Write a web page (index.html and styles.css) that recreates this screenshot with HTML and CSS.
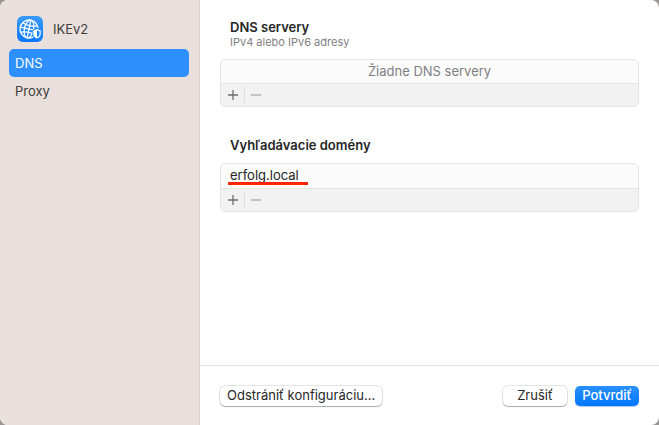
FILE: index.html
```
<!DOCTYPE html>
<html lang="sk">
<head>
<meta charset="UTF-8">
<meta name="viewport" content="width=device-width, initial-scale=1.0">
<title>IKEv2</title>
<link rel="stylesheet" href="styles.css">
</head>
<body>
<div class="window">
    <nav class="sidebar">
        <div class="profile">
            <svg class="profile-icon" viewBox="0 0 26 26" aria-hidden="true">
                <defs>
                    <linearGradient id="iconBlue" x1="0" y1="0" x2="0" y2="1">
                        <stop offset="0" stop-color="#3a9bff"/>
                        <stop offset="1" stop-color="#0a78fb"/>
                    </linearGradient>
                </defs>
                <rect width="26" height="26" rx="6" fill="url(#iconBlue)"/>
                <g fill="none" stroke="#fff" stroke-width="1.3" transform="rotate(12 12 13)">
                    <circle cx="12" cy="13" r="9"/>
                    <ellipse cx="12" cy="13" rx="4.6" ry="9"/>
                    <path d="M12 4v18M3 13h18M4.8 8.2c4 2 10.400 2 14.400 0M4.800 17.800c4-2 10.400-2 14.400 0"/>
                </g>
                <path d="M20 12.500l4.200 1.500v3.800c0 2.500-1.700 4.200-4.200 5.300-2.500-1.100-4.200-2.800-4.200-5.300v-3.800z" fill="#fff" stroke="#1c86fd" stroke-width="1"/>
                <path d="M20 14.500v6.700c1.800-.9 2.600-2 2.600-3.700v-2.100z" fill="#1c86fd"/>
            </svg>
            <span>IKEv2</span>
        </div>
        <a class="nav-item active" href="#dns">DNS</a>
        <a class="nav-item" href="#proxy">Proxy</a>
    </nav>

    <main class="main">
        <div class="content">
            <section class="group">
                <h2>DNS servery</h2>
                <p>IPv4 alebo IPv6 adresy</p>
                <div class="list">
                    <div class="list-row empty">Žiadne DNS servery</div>
                    <div class="list-tools">
                        <button type="button" class="tool" aria-label="Pridať DNS server">
                            <svg viewBox="0 0 10 10"><path d="M0 5h10M5 0v10"/></svg>
                        </button>
                        <button type="button" class="tool" aria-label="Odstrániť DNS server" disabled>
                            <svg viewBox="0 0 10 10"><path d="M0 5h10"/></svg>
                        </button>
                    </div>
                </div>
            </section>

            <section class="group">
                <h2>Vyhľadávacie domény</h2>
                <div class="list">
                    <div class="list-row"><span class="marked">erfolg.local</span></div>
                    <div class="list-tools">
                        <button type="button" class="tool" aria-label="Pridať doménu">
                            <svg viewBox="0 0 10 10"><path d="M0 5h10M5 0v10"/></svg>
                        </button>
                        <button type="button" class="tool" aria-label="Odstrániť doménu" disabled>
                            <svg viewBox="0 0 10 10"><path d="M0 5h10"/></svg>
                        </button>
                    </div>
                </div>
            </section>
        </div>

        <footer class="footer">
            <button type="button" class="btn">Odstrániť konfiguráciu...</button>
            <div class="footer-right">
                <button type="button" class="btn">Zrušiť</button>
                <button type="button" class="btn primary">Potvrdiť</button>
            </div>
        </footer>
    </main>
</div>
</body>
</html>
```
FILE: styles.css
```
* {
    box-sizing: border-box;
}

body {
    margin: 0;
    background-color: #999592;
    font-family: Inter, "Liberation Sans", sans-serif;
    font-size: 13px;
    line-height: 16px;
    color: #262626;
}

.window {
    display: flex;
    min-height: 100vh;
    border-radius: 8px;
    overflow: hidden;
    background-color: #fff;
}

.sidebar {
    flex: none;
    width: 200px;
    padding: 16px 10px 16px 9px;
    background-color: #e9e0dd;
    border-right: 1px solid #dcd4d1;
}

.profile {
    display: flex;
    align-items: center;
    gap: 10px;
    padding-left: 8px;
    margin-bottom: 7px;
    color: #403d3c;
}

.profile-icon {
    width: 26px;
    height: 26px;
}

.nav-item {
    display: block;
    padding: 6px;
    border-radius: 5px;
    color: #403d3c;
    text-decoration: none;
}

.nav-item.active {
    background-color: #2e90ff;
    color: #fff;
}

.main {
    flex: 1;
    display: flex;
    flex-direction: column;
}

.content {
    flex: 1;
    padding: 19px 20px;
}

.group {
    margin-bottom: 30px;
}

.group h2 {
    margin: 0 10px;
    font-size: 13px;
    font-weight: 600;
}

.group p {
    margin: 1px 10px 0;
    font-size: 11px;
    line-height: 13px;
    color: #808080;
}

.list {
    margin-top: 10px;
    border: 1px solid #e4e4e4;
    border-radius: 5px;
    background-color: #fbfbfb;
    overflow: hidden;
}

.list-row {
    padding: 3px 9px 5px;
}

.list-row.empty {
    padding-bottom: 4px;
    text-align: center;
    color: #808080;
}

.marked {
    position: relative;
}

/* red marker line under the domain */
.marked::after {
    content: "";
    position: absolute;
    left: -2px;
    right: -9px;
    bottom: -2px;
    height: 3px;
    background-color: #fe2600;
}

.list-tools {
    display: flex;
    align-items: center;
    height: 23px;
    border-top: 1px solid #e4e4e4;
    background-color: #f2f2f2;
}

.tool {
    display: flex;
    align-items: center;
    justify-content: center;
    width: 23px;
    height: 16px;
    padding: 0;
    border: none;
    background: none;
    color: #6e6e6e;
}

.tool + .tool {
    border-left: 1px solid #dedede;
}

.tool:disabled {
    color: #b4b4b4;
}

.tool svg {
    width: 10px;
    height: 10px;
    fill: none;
    stroke: currentColor;
    stroke-width: 1.3;
}

.footer {
    display: flex;
    align-items: center;
    justify-content: space-between;
    height: 60px;
    padding: 0 20px;
    border-top: 1px solid #e2e2e2;
}

.footer-right {
    display: flex;
    gap: 8px;
}

.btn {
    min-width: 64px;
    height: 20px;
    padding: 0 7px 1px;
    border: none;
    border-radius: 5px;
    background-color: #fff;
    box-shadow: 0 0 0 1px rgba(0, 0, 0, 0.1), 0 1px 1px rgba(0, 0, 0, 0.25);
    font: inherit;
    color: #262626;
}

.btn.primary {
    background: linear-gradient(#2a90ff, #0077fe);
    box-shadow: 0 1px 1px rgba(0, 80, 180, 0.3);
    color: #fff;
    font-weight: 500;
}
```
